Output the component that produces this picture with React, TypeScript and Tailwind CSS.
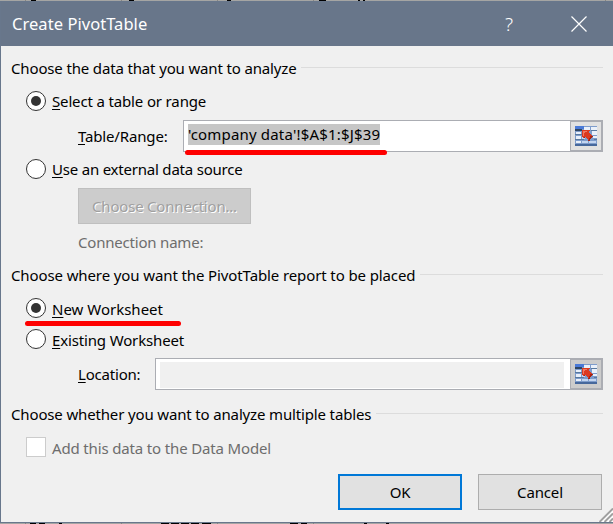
import type { ReactNode } from 'react';

function Label({ text, accel = false, className = '' }: { text: string; accel?: boolean; className?: string }) {
  return (
    <span className={`whitespace-nowrap ${className}`}>
      {accel ? (
        <>
          <span className="underline decoration-1 underline-offset-2">{text[0]}</span>
          {text.slice(1)}
        </>
      ) : (
        text
      )}
    </span>
  );
}

function GroupHeading({ children, className = '' }: { children: ReactNode; className?: string }) {
  return (
    <div className={`flex h-5 items-center gap-[5px] pl-2.5 ${className}`}>
      <span className="whitespace-nowrap">{children}</span>
      <span className="-mt-0.5 h-px flex-1 bg-[#dcdcdc]" />
    </div>
  );
}

function RadioDot({ checked = false }: { checked?: boolean }) {
  return (
    <span className="flex size-5 shrink-0 items-center justify-center rounded-full border border-[#333] bg-white">
      {checked && <span className="size-2.5 rounded-full bg-[#333]" />}
    </span>
  );
}

function RangeIcon() {
  return (
    <svg width="22" height="20" viewBox="0 0 22 20" shapeRendering="crispEdges">
      <rect width="22" height="20" fill="#7e9ccb" />
      <rect width="9" height="3" fill="#4a7ad8" />
      <rect y="3" width="7" height="2" fill="#2f4663" />
      <path d="M9 1h6v3H9zM16 1h6v3h-6zM17 5h5v4h-5zM1 6h5v2H1zM1 10h5v3H1zM18 10h4v2h-4zM1 15h5v2H1z" fill="#e9f0fa" />
      <path d="M7 10h3v3H7zM7 15h6v2H7zM14 15h7v2h-7z" fill="#c3d5f0" />
      <path d="M0 8h7v1H0zM0 13h9v1H0zM16 4h6v1h-6zM19 13h3v1h-3z" fill="#58799f" />
      <path d="M0 18h22v2H0z" fill="#46689c" />
      <path d="M7 4h8v1h-1v2h1v1h1v1h1v1h1v1h-1v1h-1v1h-1v1h-2v-1h-1v-1h-1v-1h-1v1H8v-1H7z" fill="#dc3a20" />
      <path d="M8 5h4v1h-2v1H9v3H8z" fill="#f07a62" />
      <path d="M15 10h3v1h-1v1h-1v1h-1v2h-2v-1h1v-2h1zM9 11h1v1H9z" fill="#a82412" />
    </svg>
  );
}

function RangeField({ disabled = false, children }: { disabled?: boolean; children?: ReactNode }) {
  return (
    <div className="flex h-8 flex-1 border border-[#abadb3] bg-white">
      <div className="flex flex-1 items-start pt-[3px] pl-1">{children}</div>
      <button
        className={`flex w-8 items-center justify-center border border-[#abadb3] ${
          disabled ? 'bg-[#cccccc]' : 'bg-[#e1e1e1]'
        }`}
      >
        <RangeIcon />
      </button>
    </div>
  );
}

export default function App() {
  return (
    <div className="relative flex h-[524px] w-[613px] flex-col overflow-hidden bg-[#a5a5a3] pt-px font-['Noto_Sans',sans-serif] text-[15px] leading-5 tracking-[-0.15px] text-black">
      {/* edges of the sheet showing above and below the dialog */}
      <svg className="absolute inset-0" width="613" height="524" shapeRendering="crispEdges">
        <path d="M31 0h5v1h-5zM129 0h5v1h-5zM227 0h4v1h-4zM319 0h7v1h-7zM358 0h2v1h-2zM363 0h2v1h-2z" fill="#000" />
        <path
          d="M30 523h6v1h-6zM39 523h6v1h-6zM59 523h3v1h-3zM161 523h8v1h-8zM171 523h8v1h-8zM181 523h8v1h-8zM191 523h8v1h-8zM202 523h9v1h-9zM290 523h8v1h-8zM301 523h6v1h-6zM364 523h3v1h-3zM386 523h3v1h-3z"
          fill="#000"
        />
        <path d="M25 0h1v1h-1zM121 0h1v1h-1zM217 0h1v1h-1zM313 0h1v1h-1zM605 0h1v1h-1zM25 523h1v1h-1zM121 523h1v1h-1zM217 523h1v1h-1zM313 523h1v1h-1z" fill="#858583" />
      </svg>

      <div className="relative flex h-[522px] shrink-0 flex-col border-t border-b border-l border-[#68778c] bg-[#f0f0f0]">
        <header className="flex h-11 shrink-0 items-center bg-[#68768a] pl-[11px] text-white">
          <span className="flex-1 text-[16.5px] tracking-[0.05px]">Create PivotTable</span>
          <button className="w-4 text-center text-[19px] font-light">?</button>
          <button className="mr-[26px] ml-[54px]">
            <svg width="16" height="16" viewBox="0 0 16 16" fill="none" stroke="white" strokeWidth="1.2">
              <path d="M.5.5l15 15M15.5.5l-15 15" />
            </svg>
          </button>
        </header>

        <main className="flex flex-col pr-2.5">
          <GroupHeading className="mt-3">Choose the data that you want to analyze</GroupHeading>

          <div className="mt-[13px] ml-[25px] flex h-5 items-center gap-1.5">
            <RadioDot checked />
            <Label text="Select a table or range" accel />
          </div>
          <div className="mt-[9px] flex h-8 items-center pl-[77px]">
            <Label text="Table/Range:" accel className="w-[105px]" />
            <RangeField>
              <span className="h-[21px] bg-[#c6c6c6] tracking-[0.18px]">'company data'!$A$1:$J$39</span>
            </RangeField>
          </div>

          <div className="mt-[7px] ml-[25px] flex h-5 items-center gap-1.5">
            <RadioDot />
            <Label text="Use an external data source" accel className="tracking-[-0.21px]" />
          </div>
          <button
            disabled
            className="mt-[9px] ml-[77px] h-9 w-[173px] border border-[#bfbfbf] bg-[#cccccc] tracking-[-0.2px] text-[#a0a0a0] [text-shadow:1px_1px_0_white]"
          >
            Choose Connection...
          </button>
          <Label text="Connection name:" className="mt-2 ml-[77px] h-5 tracking-[-0.2px] text-[#6d6d6d]" />

          <GroupHeading className="mt-[13px] tracking-[-0.11px]">
            Choose where you want the PivotTable report to be placed
          </GroupHeading>

          <div className="mt-[13px] ml-[25px] flex h-5 items-center gap-1.5">
            <RadioDot checked />
            <Label text="New Worksheet" accel className="relative top-px tracking-normal" />
          </div>
          <div className="mt-[11px] ml-[25px] flex h-5 items-center gap-1.5">
            <RadioDot />
            <Label text="Existing Worksheet" accel className="relative top-px" />
          </div>
          <div className="mt-[9px] flex h-8 items-center pl-[77px]">
            <Label text="Location:" accel className="w-[77px] tracking-[-0.2px]" />
            <RangeField disabled>
              <span className="mr-[6px] h-[26px] flex-1 bg-[#f0f0f0]" />
            </RangeField>
          </div>

          <GroupHeading className="mt-3.5">Choose whether you want to analyze multiple tables</GroupHeading>

          <div className="mt-[13px] ml-[25px] flex h-5 items-center gap-1.5 text-[#6d6d6d]">
            <span className="size-5 border border-[#cccccc] bg-white" />
            <Label text="Add this data to the Data Model" className="relative top-px" />
          </div>

          <div className="mt-[17px] flex justify-end gap-4 pr-px">
            <button className="h-9 w-[124px] border-2 border-[#0078d7] bg-[#e1e1e1]">OK</button>
            <button className="h-9 w-[124px] border border-[#adadad] bg-[#e1e1e1]">Cancel</button>
          </div>
        </main>

        {/* marker strokes over the dialog */}
        <span className="absolute top-[148px] left-[184px] h-[5px] w-[202px] rounded-full bg-[#fe0000]" />
        <span className="absolute top-[319px] left-6 h-[5px] w-[156px] rounded-full bg-[#fe0000]" />

        <svg className="absolute right-0 bottom-0" width="15" height="14" viewBox="0 0 15 14">
          <path d="M0 14L15 -1V14Z" fill="#fff" />
          <path d="M1.5 14L15 .5M6.5 14L15 5.5M11.5 14L15 10.5" stroke="#a0a0a0" strokeWidth="2" />
        </svg>
      </div>
    </div>
  );
}
